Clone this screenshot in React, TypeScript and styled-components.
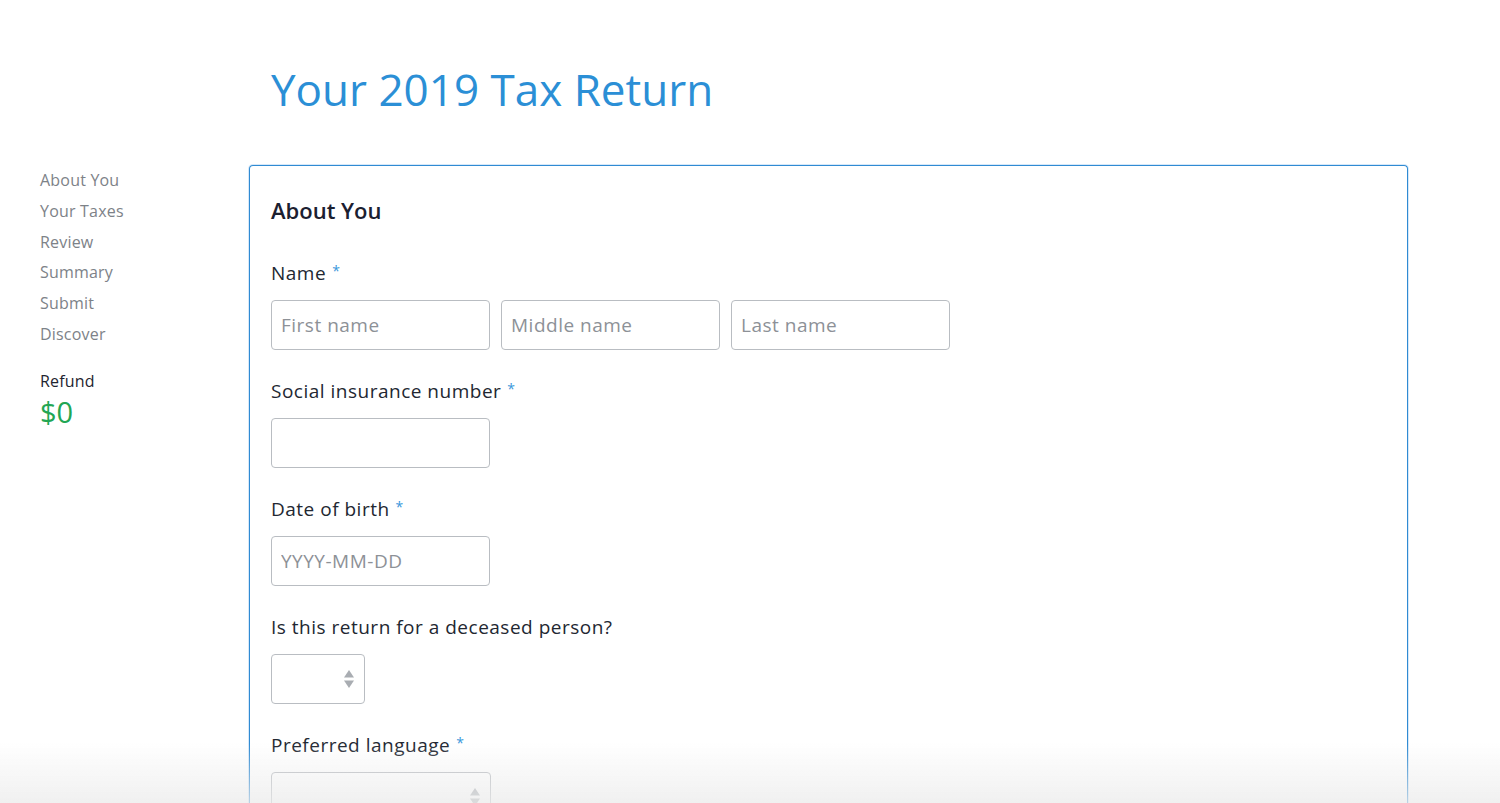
import React from 'react';
import styled, { createGlobalStyle } from 'styled-components';

const GlobalStyle = createGlobalStyle`
  html, body {
    margin: 0;
    padding: 0;
    background: #ffffff;
    font-family: "Open Sans", "Liberation Sans", sans-serif;
    overflow: hidden;
  }
  * {
    box-sizing: border-box;
  }
`;

const Page = styled.div`
  height: 803px;
  padding: 0 92px 0 40px;
  display: grid;
  grid-template-columns: 209px 1fr;
  grid-template-rows: 165px 1fr;
`;

const Title = styled.h1`
  grid-column: 2;
  margin: 0;
  padding: 61px 0 0 22px;
  font-size: 44px;
  line-height: 56px;
  font-weight: 400;
  color: #2b8fd6;
`;

const Sidebar = styled.nav`
  grid-column: 1;
  grid-row: 2;
  display: flex;
  flex-direction: column;
`;

const NavItem = styled.div`
  font-size: 16px;
  line-height: 30.8px;
  letter-spacing: 0.2px;
  color: #7d8288;
`;

const RefundLabel = styled.div`
  margin-top: 20px;
  font-size: 16px;
  line-height: 22px;
  letter-spacing: 0.2px;
  color: #1f2430;
`;

const RefundValue = styled.div`
  font-size: 29px;
  line-height: 40px;
  color: #22a653;
`;

const Card = styled.section`
  grid-column: 2;
  grid-row: 2;
  border: 1px solid #2f8bd3;
  border-bottom: none;
  border-radius: 4px 4px 0 0;
  box-shadow: 0 0 0 1px rgba(120, 180, 235, 0.3);
  padding: 30px 21px 0;
`;

const CardTitle = styled.h2`
  margin: 0 0 37px;
  font-size: 22px;
  line-height: 28px;
  font-weight: 600;
  color: #1b2030;
`;

const Field = styled.div`
  margin-bottom: 29px;
`;

const Label = styled.div`
  font-size: 19px;
  line-height: 24px;
  height: 24px;
  letter-spacing: 0.5px;
  color: #222731;
  margin-bottom: 15px;
`;

const Required = styled.span`
  color: #3a97db;
  font-size: 14px;
  line-height: 0;
  vertical-align: 4px;
  margin-left: 6px;
`;

const Row = styled.div`
  display: flex;
  gap: 11px;
`;

const Input = styled.input`
  display: block;
  width: 219px;
  height: 50px;
  margin: 0;
  border: 1px solid #b9bdc2;
  border-radius: 4px;
  padding: 0 9px;
  font-family: inherit;
  font-size: 19px;
  letter-spacing: 0.5px;
  color: #222;
  background: #fff;
  outline: none;
  &::placeholder {
    color: #8d9197;
  }
`;

const Select = styled.div<{ $width: number }>`
  width: ${(p) => p.$width}px;
  height: 50px;
  border: 1px solid #b9bdc2;
  border-radius: 4px;
  background: #fff;
  display: flex;
  align-items: center;
  justify-content: flex-end;
  padding-right: 9px;
`;

const Shade = styled.div`
  position: fixed;
  left: 0;
  right: 0;
  bottom: 0;
  height: 60px;
  pointer-events: none;
  background: linear-gradient(to bottom, rgba(235, 235, 235, 0), rgba(235, 235, 235, 0.75));
`;

const Arrows = () => (
  <svg width="12" height="20" viewBox="0 0 12 20">
    <path d="M6 1 L11 8.5 L1 8.5 Z" fill="#a9adb2" />
    <path d="M6 19 L11 11.5 L1 11.5 Z" fill="#a9adb2" />
  </svg>
);

const nav = ['About You', 'Your Taxes', 'Review', 'Summary', 'Submit', 'Discover'];

const App: React.FC = () => {
  return (
    <>
      <GlobalStyle />
      <Page>
        <Title>Your 2019 Tax Return</Title>
        <Sidebar>
          {nav.map((n) => (
            <NavItem key={n}>{n}</NavItem>
          ))}
          <RefundLabel>Refund</RefundLabel>
          <RefundValue>$0</RefundValue>
        </Sidebar>
        <Card>
          <CardTitle>About You</CardTitle>
          <Field>
            <Label>
              Name<Required>*</Required>
            </Label>
            <Row>
              <Input placeholder="First name" />
              <Input placeholder="Middle name" />
              <Input placeholder="Last name" />
            </Row>
          </Field>
          <Field>
            <Label>
              Social insurance number<Required>*</Required>
            </Label>
            <Input />
          </Field>
          <Field>
            <Label>
              Date of birth<Required>*</Required>
            </Label>
            <Input placeholder="YYYY-MM-DD" />
          </Field>
          <Field>
            <Label>Is this return for a deceased person?</Label>
            <Select $width={94}>
              <Arrows />
            </Select>
          </Field>
          <Field>
            <Label>
              Preferred language<Required>*</Required>
            </Label>
            <Select $width={220}>
              <Arrows />
            </Select>
          </Field>
        </Card>
      </Page>
      <Shade />
    </>
  );
};

export default App;
